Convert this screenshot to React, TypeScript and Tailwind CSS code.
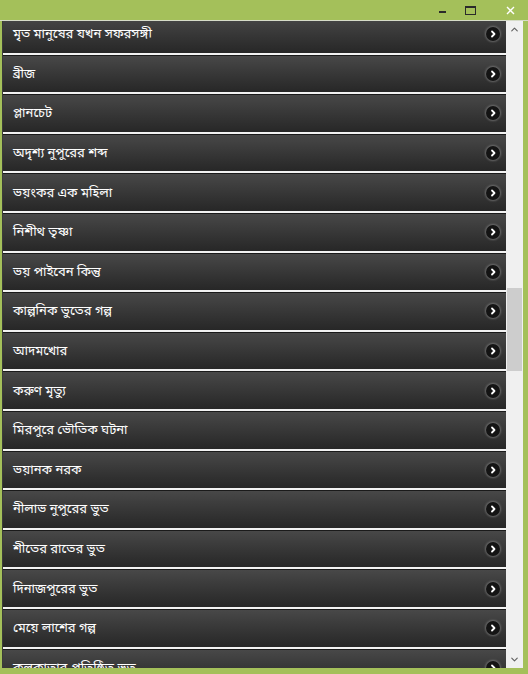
import { ChevronUp, ChevronDown } from "lucide-react";

// গল্পের তালিকা
const STORIES: string[] = [
  "মৃত মানুষের যখন সফরসঙ্গী",
  "ব্রীজ",
  "প্লানচেট",
  "অদৃশ্য নুপুরের শব্দ",
  "ভয়ংকর এক মহিলা",
  "নিশীথ তৃষ্ণা",
  "ভয় পাইবেন কিন্তু",
  "কাল্পনিক ভুতের গল্প",
  "আদমখোর",
  "করুণ মৃত্যু",
  "মিরপুরে ভৌতিক ঘটনা",
  "ভয়ানক নরক",
  "নীলাভ নুপুরের ভুত",
  "শীতের রাতের ভুত",
  "দিনাজপুরের ভুত",
  "মেয়ে লাশের গল্প",
  "কলকাতার প্রতিষ্ঠিত ভূত",
];

function ArrowBadge() {
  return (
    <span className="flex h-[14px] w-[14px] items-center justify-center rounded-full bg-[#141414] shadow-[0_0_2px_1px_rgba(140,140,140,0.6)]">
      <svg width="8" height="8" viewBox="0 0 8 8">
        <path
          d="M3 1.5 L5.5 4 L3 6.5"
          fill="none"
          stroke="#fff"
          strokeWidth="1.8"
          strokeLinecap="round"
          strokeLinejoin="round"
        />
      </svg>
    </span>
  );
}

function StoryRow({ title }: { title: string }) {
  return (
    <div className="flex h-[39.6px] shrink-0 items-center justify-between border-t border-b-2 border-t-[#1a1a1a] border-b-[#f2f2f2] bg-gradient-to-b from-[#484848] to-[#272727] pl-[10px] pr-[6px]">
      <span className="mt-[1px] text-[13px] leading-none text-white">{title}</span>
      <ArrowBadge />
    </div>
  );
}

function TitleBar() {
  return (
    <div className="flex h-[21px] items-center justify-end border-b border-b-[#d6dcc8]">
      {/* minimize */}
      <div className="flex h-[21px] w-[28px] items-center justify-center">
        <span className="mt-[4px] block h-[2px] w-[7px] bg-[#2a2a2a]" />
      </div>
      {/* maximize */}
      <div className="flex h-[21px] w-[28px] items-center justify-center">
        <span className="block h-[9px] w-[11px] border border-t-2 border-[#2a2a2a]" />
      </div>
      {/* close */}
      <div className="flex h-[21px] w-[44px] items-center justify-center pl-[8px]">
        <svg width="9" height="9" viewBox="0 0 9 9">
          <path d="M1 1 L8 8 M8 1 L1 8" stroke="#fff" strokeWidth="1.4" />
        </svg>
      </div>
    </div>
  );
}

function ScrollBar() {
  return (
    <div className="flex w-[17px] flex-col bg-[#f0f0f0]">
      <div className="flex h-[17px] items-center justify-center text-[#606060]">
        <ChevronUp size={11} strokeWidth={2.5} />
      </div>
      <div className="flex flex-1 flex-col px-[1px]">
        <div className="h-[250px]" />
        <div className="h-[83px] bg-[#cdcdcd]" />
      </div>
      <div className="flex h-[17px] items-center justify-center text-[#606060]">
        <ChevronDown size={11} strokeWidth={2.5} />
      </div>
    </div>
  );
}

export default function App() {
  return (
    <div
      className="flex h-[674px] w-[528px] flex-col bg-[#a4c05a]"
      style={{ fontFamily: '"Noto Sans Bengali", "Noto Sans", "Liberation Sans", sans-serif' }}
    >
      <TitleBar />
      <div className="mb-[6px] ml-[2px] mr-[5px] flex min-h-0 flex-1">
        <div className="flex min-w-0 flex-1 flex-col overflow-hidden border-l border-l-[#3a3a3a] bg-[#2a2a2a]">
          <div className="-mt-[6px] flex flex-col">
            {STORIES.map((title) => (
              <StoryRow key={title} title={title} />
            ))}
          </div>
        </div>
        <ScrollBar />
      </div>
    </div>
  );
}
